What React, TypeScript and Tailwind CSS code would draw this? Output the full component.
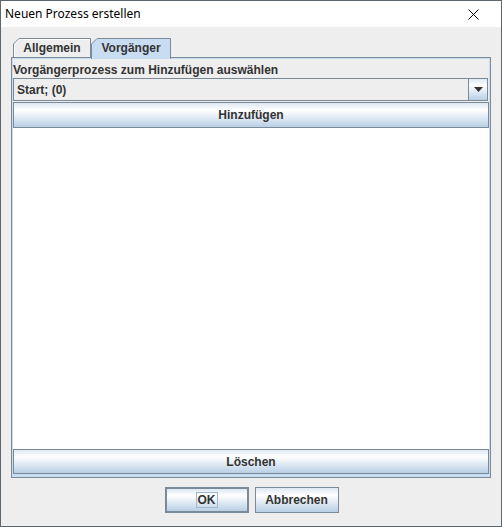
import React from "react";

const grad = "bg-[linear-gradient(to_bottom,#dde8f3,#ffffff_30%,#b8cfe5)]";

function Tab({ label, width, selected }: { label: string; width: number; selected?: boolean }) {
  const h = selected ? 21 : 19;
  return (
    <div
      className={selected ? "relative z-10 h-[21px] flex items-start justify-center" : "relative h-[19px] flex items-start justify-center"}
      style={{ width }}
    >
      <svg className="absolute inset-0" width={width} height={h}>
        <path
          d={`M0.5,${h} L0.5,6 L6,0.5 L${width - 0.5},0.5 L${width - 0.5},${h}`}
          fill={selected ? "#c8ddf2" : "#eeeeee"}
          stroke="#7a8a99"
          strokeWidth="1"
        />
        {!selected && (
          <path d={`M1.5,${h} L1.5,6.5 L6.5,1.5 L${width - 1.5},1.5`} fill="none" stroke="#ffffff" strokeWidth="1" />
        )}
      </svg>
      <span className="relative pt-[3px] text-[12px] leading-[14px] font-bold text-[#333333]">{label}</span>
    </div>
  );
}

export default function App() {
  return (
    <div className="w-[502px] h-[527px] border border-[#5c6670] bg-[#eeeeee] flex flex-col font-['Liberation_Sans',Arial,sans-serif]">
      <div className="h-[26px] bg-white flex items-center justify-between pl-[4px] pr-[22px]">
        <span className="text-[12px] text-black font-['Noto_Sans',sans-serif]">Neuen Prozess erstellen</span>
        <svg width="11" height="11" viewBox="0 0 11 11">
          <path d="M0.5,0.5 L10.5,10.5 M10.5,0.5 L0.5,10.5" stroke="#000" strokeWidth="1" />
        </svg>
      </div>
      <div className="flex flex-col px-[10px] pt-[11px]">
        <div className="h-[19px] flex pl-[2px]">
          <Tab label="Allgemein" width={78} />
          <Tab label="Vorgänger" width={80} selected />
        </div>
        <div className="w-[480px] h-[421px] border border-[#7a8a99] bg-[#c8ddf2] pt-[1px] px-[1px] pb-[3px] flex flex-col">
          <div className="flex-1 flex flex-col bg-[#eeeeee]">
            <div className="h-[19px] pt-[4px] text-[12px] leading-[14px] font-bold text-[#333333]">
              Vorgängerprozess zum Hinzufügen auswählen
            </div>
            <div className="h-[23px] mr-[1px] border border-[#7a8a99] bg-[#eeeeee] flex">
              <div className="flex-1 flex items-center pl-[3px] text-[12px] font-bold text-[#333333]">Start; (0)</div>
              <div className={`w-[19px] border-l border-[#7a8a99] flex items-center justify-center ${grad}`}>
                <svg width="9" height="5" viewBox="0 0 9 5">
                  <path d="M0,0 L9,0 L4.5,5 Z" fill="#333333" />
                </svg>
              </div>
            </div>
            <div className={`mt-[1px] h-[26px] border border-[#7a8a99] flex items-center justify-center text-[12px] font-bold text-[#333333] ${grad}`}>
              Hinzufügen
            </div>
            <div className="flex-1 bg-white" />
            <div className={`h-[25px] border border-[#7a8a99] flex items-center justify-center text-[12px] font-bold text-[#333333] ${grad}`}>
              Löschen
            </div>
          </div>
        </div>
        <div className="mt-[9px] flex justify-center gap-[6px] pl-[1px]">
          <div className={`w-[84px] h-[26px] border-2 border-[#7a8a99] flex items-center justify-center ${grad}`}>
            <span className="border border-[#a3b8cc] px-[1px] text-[12px] leading-[14px] font-bold text-[#333333]">OK</span>
          </div>
          <div className={`w-[84px] h-[26px] border border-[#7a8a99] flex items-center justify-center text-[12px] font-bold text-[#333333] ${grad}`}>
            Abbrechen
          </div>
        </div>
      </div>
    </div>
  );
}
